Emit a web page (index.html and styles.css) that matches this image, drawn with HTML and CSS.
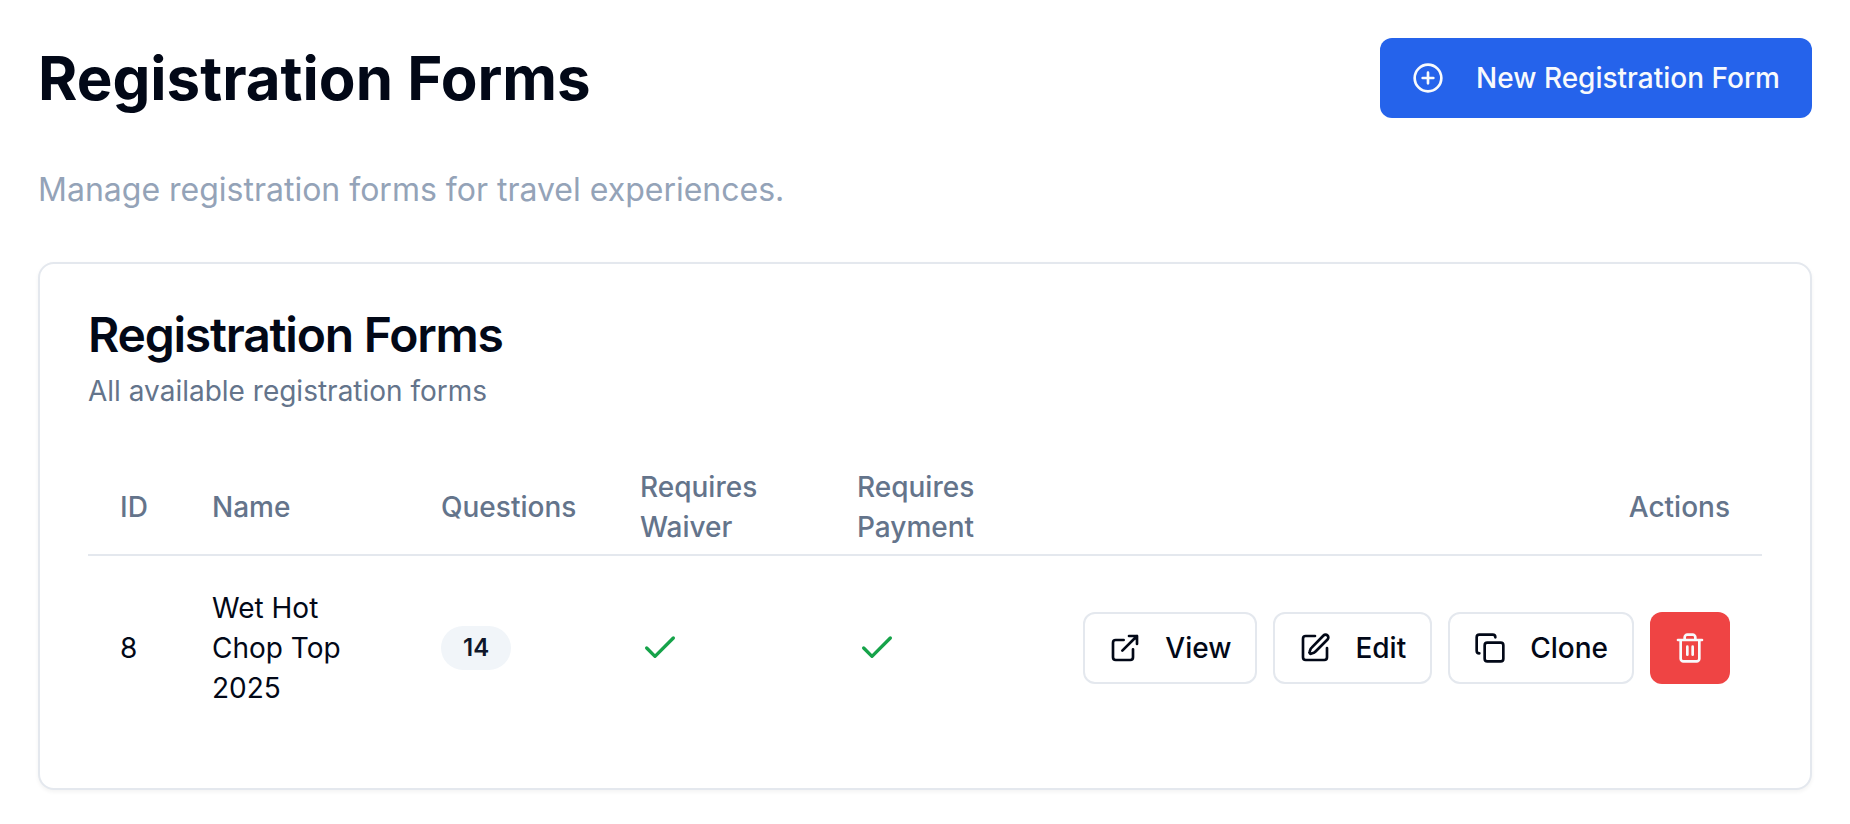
FILE: index.html
```html
<!DOCTYPE html>
<html lang="en">
<head>
<meta charset="utf-8">
<meta name="viewport" content="width=device-width, initial-scale=1">
<title>Registration Forms</title>
<link rel="stylesheet" href="styles.css">
</head>
<body>
<main class="page">
  <header class="page-header">
    <h1 class="page-title">Registration Forms</h1>
    <button type="button" class="btn btn-primary">
      <svg class="icon" viewBox="0 0 24 24" aria-hidden="true"><circle cx="12" cy="12" r="10"/><path d="M8 12h8M12 8v8"/></svg>
      New Registration Form
    </button>
  </header>
  <p class="page-lead">Manage registration forms for travel experiences.</p>

  <section class="card">
    <div class="card-header">
      <h2 class="card-title">Registration Forms</h2>
      <p class="card-description">All available registration forms</p>
    </div>
    <table class="table">
      <thead>
        <tr>
          <th scope="col" class="col-id">ID</th>
          <th scope="col" class="col-name">Name</th>
          <th scope="col" class="col-questions">Questions</th>
          <th scope="col" class="col-waiver">Requires Waiver</th>
          <th scope="col" class="col-payment">Requires Payment</th>
          <th scope="col" class="col-actions">Actions</th>
        </tr>
      </thead>
      <tbody>
        <tr>
          <td>8</td>
          <td>Wet Hot Chop Top 2025</td>
          <td><span class="badge">14</span></td>
          <td><svg class="check" viewBox="0 0 24 24" role="img" aria-label="Yes"><path d="M20 6 9 17l-5-5"/></svg></td>
          <td><svg class="check" viewBox="0 0 24 24" role="img" aria-label="Yes"><path d="M20 6 9 17l-5-5"/></svg></td>
          <td>
            <div class="actions">
              <button type="button" class="btn btn-outline">
                <svg class="icon" viewBox="0 0 24 24" aria-hidden="true"><path d="M15 3h6v6M10 14 21 3M18 13v6a2 2 0 0 1-2 2H5a2 2 0 0 1-2-2V8a2 2 0 0 1 2-2h6"/></svg>
                View
              </button>
              <button type="button" class="btn btn-outline">
                <svg class="icon" viewBox="0 0 24 24" aria-hidden="true"><path d="M12 3H5a2 2 0 0 0-2 2v14a2 2 0 0 0 2 2h14a2 2 0 0 0 2-2v-7"/><path d="M18.375 2.625a2.121 2.121 0 1 1 3 3L12.400 14.600a4 4 0 0 1-1.300.900l-1.700.600a1 1 0 0 1-1.400-1.400l.600-1.700a4 4 0 0 1 .900-1.300z"/></svg>
                Edit
              </button>
              <button type="button" class="btn btn-outline">
                <svg class="icon" viewBox="0 0 24 24" aria-hidden="true"><rect width="14" height="14" x="8" y="8" rx="2"/><path d="M4 16c-1.100 0-2-.9-2-2V4c0-1.100.9-2 2-2h10c1.100 0 2 .9 2 2"/></svg>
                Clone
              </button>
              <button type="button" class="btn btn-danger" aria-label="Delete">
                <svg class="icon" viewBox="0 0 24 24" aria-hidden="true"><path d="M3 6h18M19 6v14c0 1-1 2-2 2H7c-1 0-2-1-2-2V6M8 6V4c0-1 1-2 2-2h4c1 0 2 1 2 2v2M10 11v6M14 11v6"/></svg>
              </button>
            </div>
          </td>
        </tr>
      </tbody>
    </table>
  </section>
</main>
</body>
</html>
```
FILE: styles.css
```css
* {
  box-sizing: border-box;
  margin: 0;
}

body {
  background: #fff;
  color: #020817;
  font-family: Inter, "Liberation Sans", sans-serif;
  font-size: 28px;
  line-height: 40px;
}

.page {
  display: flex;
  flex-direction: column;
  gap: 48px;
  padding: 38px 38px 32px;
}

.page-header {
  display: flex;
  align-items: center;
  justify-content: space-between;
}

.page-title {
  font-size: 60px;
  font-weight: 700;
  line-height: 72px;
}

.page-lead {
  color: #94a3b8;
  font-size: 32px;
  line-height: 48px;
}

.btn {
  display: inline-flex;
  align-items: center;
  justify-content: center;
  gap: 24px;
  height: 72px;
  padding: 0 24px;
  border: 0;
  border-radius: 12px;
  font: inherit;
  font-weight: 500;
  white-space: nowrap;
  cursor: pointer;
}

.btn-primary {
  gap: 32px;
  height: 80px;
  padding: 0 32px;
  background: #2563eb;
  color: #f8fafc;
}

.btn-outline {
  border: 2px solid #e4e8ee;
  background: #fff;
  color: #020817;
}

.btn-danger {
  background: #ef4444;
  color: #f8fafc;
}

.icon,
.check {
  flex: none;
  fill: none;
  stroke: currentColor;
  stroke-width: 2;
  stroke-linecap: round;
  stroke-linejoin: round;
}

.icon {
  width: 32px;
  height: 32px;
}

.check {
  display: block;
  width: 40px;
  height: 40px;
  color: #16a34a;
}

.card {
  display: flex;
  flex-direction: column;
  gap: 48px;
  padding: 47px 48px 48px;
  border: 2px solid #e4e8ee;
  border-radius: 16px;
  background: #fff;
  box-shadow: 0 2px 4px rgb(0 0 0 / 5%);
}

.card-header {
  display: flex;
  flex-direction: column;
  gap: 12px;
}

.card-title {
  font-size: 48px;
  font-weight: 600;
  letter-spacing: -0.025em;
  line-height: 48px;
}

.card-description {
  color: #64748b;
}

.table {
  width: 100%;
  border-collapse: collapse;
  table-layout: fixed;
}

.table th {
  height: 96px;
  padding: 0 32px;
  border-bottom: 2px solid #e4e8ee;
  color: #64748b;
  font-weight: 500;
  text-align: left;
}

.table td {
  padding: 32px;
}

.table .col-id {
  width: 92px;
  padding-right: 0;
}

.table .col-name {
  width: 229px;
}

.table .col-questions {
  width: 199px;
}

.table .col-waiver,
.table .col-payment {
  width: 217px;
}

.table .col-actions {
  text-align: right;
}

.badge {
  display: inline-block;
  padding: 6px 22px;
  border-radius: 22px;
  background: #f1f5f9;
  color: #0f172a;
  font-size: 24px;
  font-weight: 600;
  line-height: 32px;
  vertical-align: middle;
}

.actions {
  display: flex;
  justify-content: flex-end;
  gap: 16px;
}
```
